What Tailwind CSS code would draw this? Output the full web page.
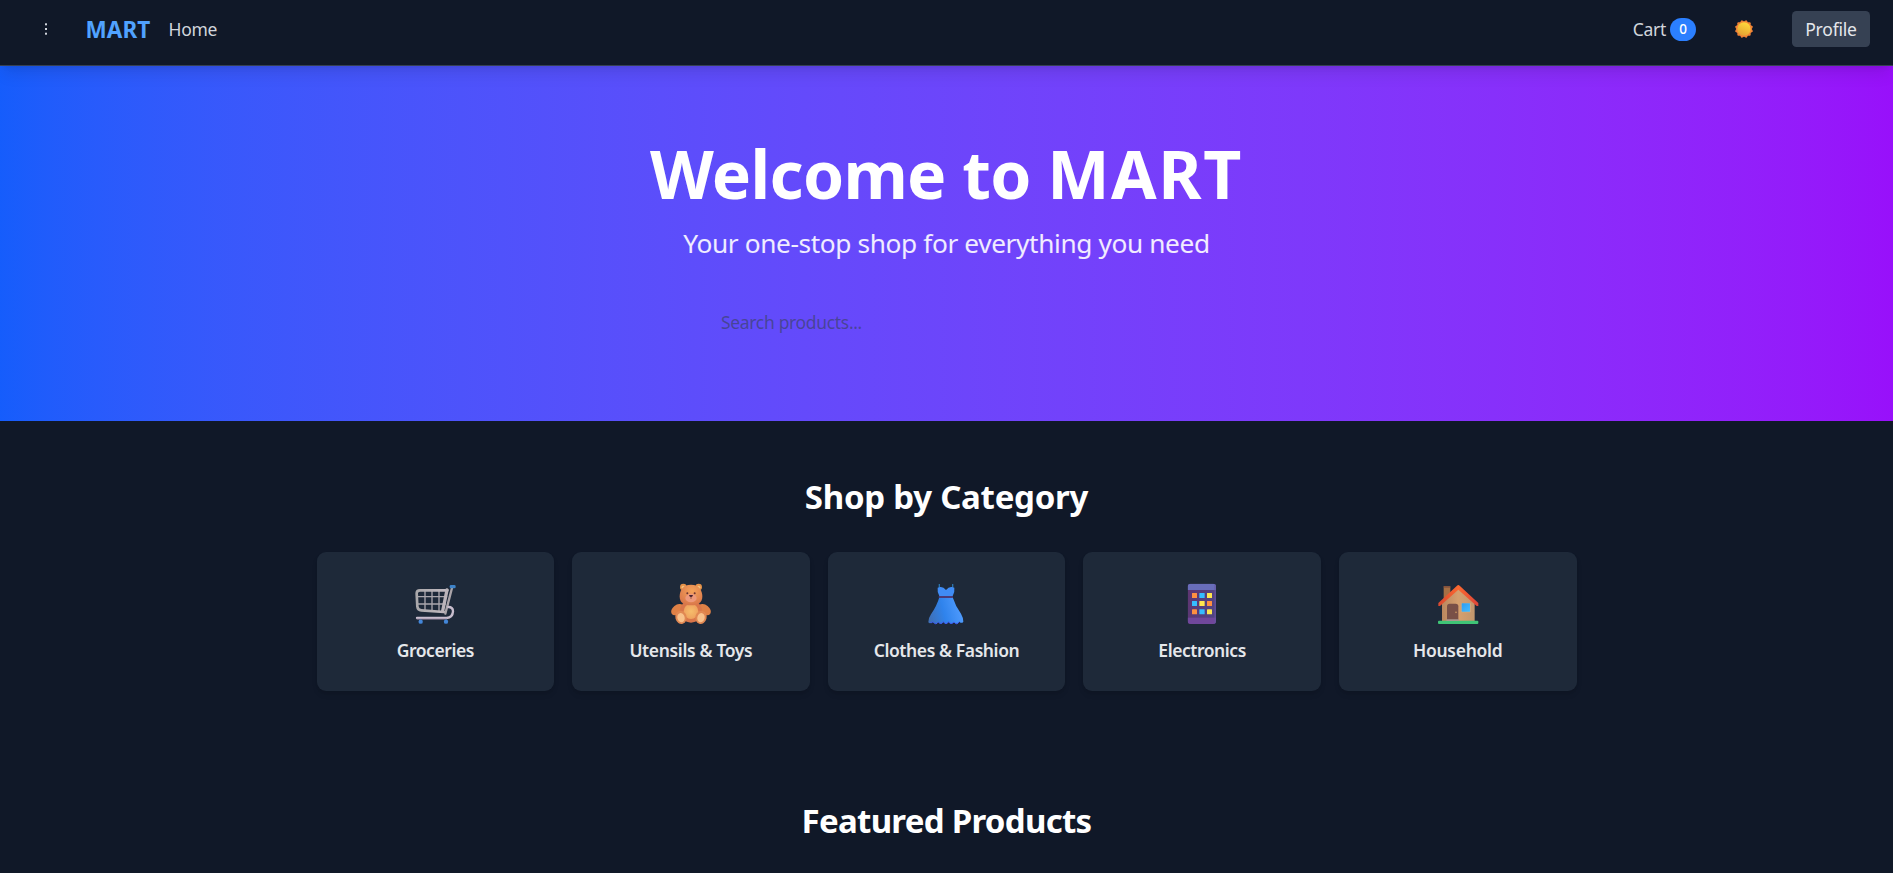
<!DOCTYPE html>
<html lang="en" class="text-[18px]">
<head>
<meta charset="utf-8">
<title>MART</title>
<script src="https://cdn.jsdelivr.net/npm/@tailwindcss/browser@4"></script>
</head>
<body class="h-screen overflow-hidden bg-[#101828] font-['Noto_Sans',sans-serif] text-[17.5px] leading-[27px] text-gray-200">
<header class="relative z-10 flex h-[66px] items-start justify-between border-b border-[#364153] bg-[#101828] pt-[11px] pr-[23px] pl-[36px] shadow-lg">
  <div class="flex h-[36px] items-center">
    <button class="flex w-[19px] justify-center" aria-label="Menu">
      <svg class="h-[12px] w-[4px]" viewBox="0 0 4 12" fill="#d1d5dc"><rect x="1" y="0.3" width="2" height="2"/><rect x="1" y="5" width="2" height="2"/><rect x="1" y="9.7" width="2" height="2"/></svg>
    </button>
    <a class="ml-[30.5px] w-[68px] text-[22.5px] font-bold tracking-[0.1px] text-[#50a2ff]">MART</a>
    <a class="ml-[15px] pt-px tracking-[-0.3px] text-gray-300">Home</a>
  </div>
  <div class="flex h-[36px] items-center">
    <a class="flex items-center gap-[4px] tracking-[-0.3px] text-gray-300"><span class="pt-px">Cart</span><span class="flex h-[23px] w-[26px] items-center justify-center rounded-full bg-[#2b7fff] pt-px text-[13.5px] font-medium tracking-normal text-white">0</span></a>
    <svg class="ml-[39px] h-[18px] w-[18px]" viewBox="0 0 54 54">
      <defs><linearGradient id="sun" x1="0.7" y1="0" x2="0.3" y2="1"><stop stop-color="#ffd93b"/><stop offset="1" stop-color="#e2a033"/></linearGradient></defs>
      <g fill="#f08235"><rect x="7" y="7" width="40" height="40" rx="3"/><rect x="7" y="7" width="40" height="40" rx="3" transform="rotate(30 27 27)"/><rect x="7" y="7" width="40" height="40" rx="3" transform="rotate(60 27 27)"/></g>
      <circle cx="27" cy="27" r="20" fill="url(#sun)"/>
    </svg>
    <button class="ml-[39px] flex h-[36px] w-[78px] items-center justify-center rounded-[4.5px] bg-[#364153] pt-px tracking-[-0.2px]">Profile</button>
  </div>
</header>

<main>
  <section class="flex h-[355px] flex-col items-center bg-linear-to-r from-blue-600 to-purple-600 pt-[74px] text-center">
    <h1 class="mb-[17px] text-[66px] leading-[67.5px] font-bold tracking-[-0.7px] text-white">Welcome to <span class="tracking-[1.6px]">MART</span></h1>
    <p class="text-[26.25px] leading-[36px] tracking-[-0.38px] text-white/90">Your one-stop shop for everything you need</p>
    <form class="mt-[35px] w-[504px]">
      <input class="h-[54px] w-full px-[26.5px] pb-[2px] tracking-[-0.33px] outline-none placeholder:text-[#364153]/60" placeholder="Search products...">
    </form>
  </section>

  <section class="mx-auto w-[1260px] py-[54px]">
    <h2 class="mb-[34px] pt-[2px] text-center text-[33px] leading-[40.5px] font-bold tracking-[-0.25px] text-white">Shop by Category</h2>
    <div class="grid grid-cols-5 gap-[18px] text-center font-semibold">
      <div class="flex h-[139px] flex-col items-center rounded-[9px] bg-[#1e2939] pt-[32px] shadow-md">
        <svg class="mb-[13px] h-[40px] w-[40px] overflow-visible" viewBox="31 42 120 120">
          <defs><linearGradient id="cart"><stop stop-color="#aaa8ab"/><stop offset="1" stop-color="#c2bac1"/></linearGradient></defs>
          <g fill="none" stroke-linejoin="round" stroke-linecap="round">
            <path d="M61 62V120M82 62V122M103 62V124M40 80H126M40 102H122" stroke="#aaa6ad" stroke-width="4"/>
            <path d="M128 61H46Q36 61 36 70L38 109Q39 120 50 121L118 126" stroke="url(#cart)" stroke-width="8"/>
            <path d="M127 60L114 123" stroke="#bbb4ba" stroke-width="10"/>
            <path d="M142 54L122 131" stroke="#aaa4a9" stroke-width="7"/>
            <path d="M131 111Q145 111 145 124Q144 142 126 144H37" stroke="#c8bdcd" stroke-width="7"/>
            <path d="M37 147H126" stroke="#8e7b9c" stroke-width="2"/>
          </g>
          <rect x="135" y="45" width="18" height="10" rx="4" fill="#3e83c9"/>
          <circle cx="48" cy="155" r="6.5" fill="#4386d8"/><circle cx="124" cy="155" r="6.5" fill="#4386d8"/>
        </svg>
        <span class="tracking-[-0.45px]">Groceries</span>
      </div>
      <div class="flex h-[139px] flex-col items-center rounded-[9px] bg-[#1e2939] pt-[32px] shadow-md">
        <svg class="mb-[13px] h-[40px] w-[40px] overflow-visible" viewBox="33 42 120 120">
          <defs>
            <radialGradient id="bear" cx="0.55" cy="0.3" r="0.7"><stop stop-color="#f5a35a"/><stop offset="1" stop-color="#d9774a"/></radialGradient>
            <radialGradient id="tummy"><stop stop-color="#f6bd6c"/><stop offset="1" stop-color="#efa25e"/></radialGradient>
          </defs>
          <ellipse cx="52" cy="119" rx="21" ry="14" fill="#df8146" transform="rotate(-38 52 119)"/>
          <ellipse cx="134" cy="119" rx="21" ry="14" fill="#df8146" transform="rotate(38 134 119)"/>
          <ellipse cx="93" cy="124" rx="33" ry="34" fill="#d9764a"/>
          <ellipse cx="93" cy="124" rx="22" ry="23" fill="url(#tummy)"/>
          <circle cx="70" cy="51" r="10" fill="#e69249"/><circle cx="116" cy="51" r="10" fill="#e69249"/>
          <circle cx="70" cy="52" r="5" fill="#f4c17c"/><circle cx="116" cy="52" r="5" fill="#f4c17c"/>
          <path d="M93 44C119 44 127 63 127 80C127 98 112 106 93 106C74 106 59 98 59 80C59 63 67 44 93 44Z" fill="url(#bear)"/>
          <ellipse cx="93" cy="84" rx="17" ry="13" fill="#ee997b"/>
          <circle cx="82" cy="70" r="3" fill="#6b3434"/><circle cx="104" cy="70" r="3" fill="#6b3434"/>
          <path d="M87 75H99Q98 81 93 82Q88 81 87 75Z" fill="#4a2430"/><path d="M93 81V87" stroke="#7c4238" stroke-width="2"/>
          <ellipse cx="63" cy="142" rx="17" ry="20" fill="#e18853" transform="rotate(-15 63 142)"/>
          <ellipse cx="123" cy="142" rx="17" ry="20" fill="#e18853" transform="rotate(15 123 142)"/>
          <ellipse cx="63" cy="143" rx="11" ry="14" fill="#f8c18b" transform="rotate(-15 63 143)"/>
          <ellipse cx="123" cy="143" rx="11" ry="14" fill="#f8c18b" transform="rotate(15 123 143)"/>
        </svg>
        <span class="tracking-[-0.35px]">Utensils &amp; Toys</span>
      </div>
      <div class="flex h-[139px] flex-col items-center rounded-[9px] bg-[#1e2939] pt-[32px] shadow-md">
        <svg class="mb-[13px] h-[40px] w-[40px] overflow-visible" viewBox="35 42 120 120">
          <defs><linearGradient id="dress" x1="0" y1="0.7" x2="1" y2="0.5"><stop stop-color="#3f6fb5"/><stop offset="0.45" stop-color="#2f83ec"/><stop offset="1" stop-color="#529dff"/></linearGradient></defs>
          <path d="M75 42V58M115 42V58" stroke="#2c72a8" stroke-width="4"/>
          <path d="M70 53L78 51Q87 50 95 60Q103 50 112 51L120 53Q122 66 115 78H75Q68 66 70 53Z" fill="#408cf5"/>
          <path d="M75 82H115Q123 108 140 131Q147 143 147 155Q142 162 135 155Q127 167 119 156Q109 166 103 155Q95 167 87 155Q80 166 72 156Q64 167 56 155Q47 163 42 157Q41 146 50 133Q68 107 75 82Z" fill="url(#dress)"/>
          <path d="M48 157Q51 160 56 155Q64 167 72 156Q80 166 87 155Q95 167 103 155Q109 166 119 156Q127 167 135 155" fill="none" stroke="#405cf2" stroke-width="3"/>
          <rect x="73" y="78" width="43" height="6" rx="2" fill="#4b3b79"/>
        </svg>
        <span class="tracking-[-0.4px]">Clothes &amp; Fashion</span>
      </div>
      <div class="flex h-[139px] flex-col items-center rounded-[9px] bg-[#1e2939] pt-[32px] shadow-md">
        <svg class="mb-[13px] h-[40px] w-[40px] overflow-visible" viewBox="36 42 120 120">
          <defs>
            <linearGradient id="phone" x1="0" y1="0" x2="1" y2="0.3"><stop stop-color="#5f3470"/><stop offset="1" stop-color="#514482"/></linearGradient>
            <clipPath id="case"><rect x="53" y="41" width="85" height="121" rx="9"/></clipPath>
          </defs>
          <g clip-path="url(#case)"><rect x="53" y="41" width="85" height="121" fill="url(#phone)"/><rect x="53" y="41" width="85" height="19" fill="#686dba"/><rect x="53" y="143" width="85" height="19" fill="#70479b"/><rect x="133" y="41" width="5" height="121" fill="#6757a4" opacity="0.6"/></g>
          <g fill="#ff9040"><rect x="66" y="69" width="15" height="15" rx="1"/><rect x="111" y="93" width="15" height="15" rx="1"/><rect x="66" y="118" width="15" height="15" rx="1"/></g>
          <g fill="#35bdff"><rect x="88" y="69" width="16" height="15" rx="1"/><rect x="66" y="93" width="15" height="15" rx="1"/><rect x="88" y="118" width="16" height="15" rx="1"/></g>
          <g fill="#ffe64e"><rect x="111" y="69" width="15" height="15" rx="1"/><rect x="88" y="93" width="16" height="15" rx="1"/><rect x="111" y="118" width="15" height="15" rx="1"/></g>
        </svg>
        <span class="tracking-[-0.45px]">Electronics</span>
      </div>
      <div class="flex h-[139px] flex-col items-center rounded-[9px] bg-[#1e2939] pt-[32px] shadow-md">
        <svg class="mb-[13px] h-[40px] w-[40px] overflow-visible" viewBox="29 42 120 120">
          <defs>
            <linearGradient id="wall"><stop stop-color="#b9875f"/><stop offset="0.5" stop-color="#d6a06e"/><stop offset="1" stop-color="#c1966d"/></linearGradient>
            <linearGradient id="roof"><stop stop-color="#d84830"/><stop offset="0.5" stop-color="#fa6830"/><stop offset="1" stop-color="#dd4438"/></linearGradient>
            <linearGradient id="pane" x1="0" y1="0" x2="1" y2="1"><stop stop-color="#2b9cf0"/><stop offset="1" stop-color="#45bcff"/></linearGradient>
          </defs>
          <rect x="46" y="48" width="20" height="55" rx="2" fill="#a66f44"/><rect x="46" y="48" width="20" height="5" rx="2" fill="#85523c"/>
          <path d="M41 96L90 54L139 96V153H41Z" fill="url(#wall)"/>
          <path d="M30 99L86 47Q90 43 94 47L150 99V108H145L90 59L35 108H30Z" fill="url(#roof)"/>
          <path d="M56 153V109Q56 101 64 101H82Q90 101 90 109V153Z" fill="#795047"/><circle cx="83" cy="127" r="2.5" fill="#d19a62"/>
          <rect x="99" y="99" width="28" height="28" rx="2" fill="#d3ae85"/><rect x="100" y="100" width="25" height="25" rx="1" fill="url(#pane)"/>
          <rect x="29" y="152" width="121" height="10" rx="3" fill="#3fc476"/><rect x="54" y="148" width="38" height="5" rx="1" fill="#a8998f"/>
        </svg>
        <span class="tracking-[-0.3px]">Household</span>
      </div>
    </div>
  </section>

  <section class="mx-auto w-[1260px] pt-[54px]">
    <h2 class="pt-[2px] text-center text-[33px] leading-[40.5px] font-bold tracking-[-0.72px] text-white">Featured Products</h2>
  </section>
</main>
</body>
</html>
